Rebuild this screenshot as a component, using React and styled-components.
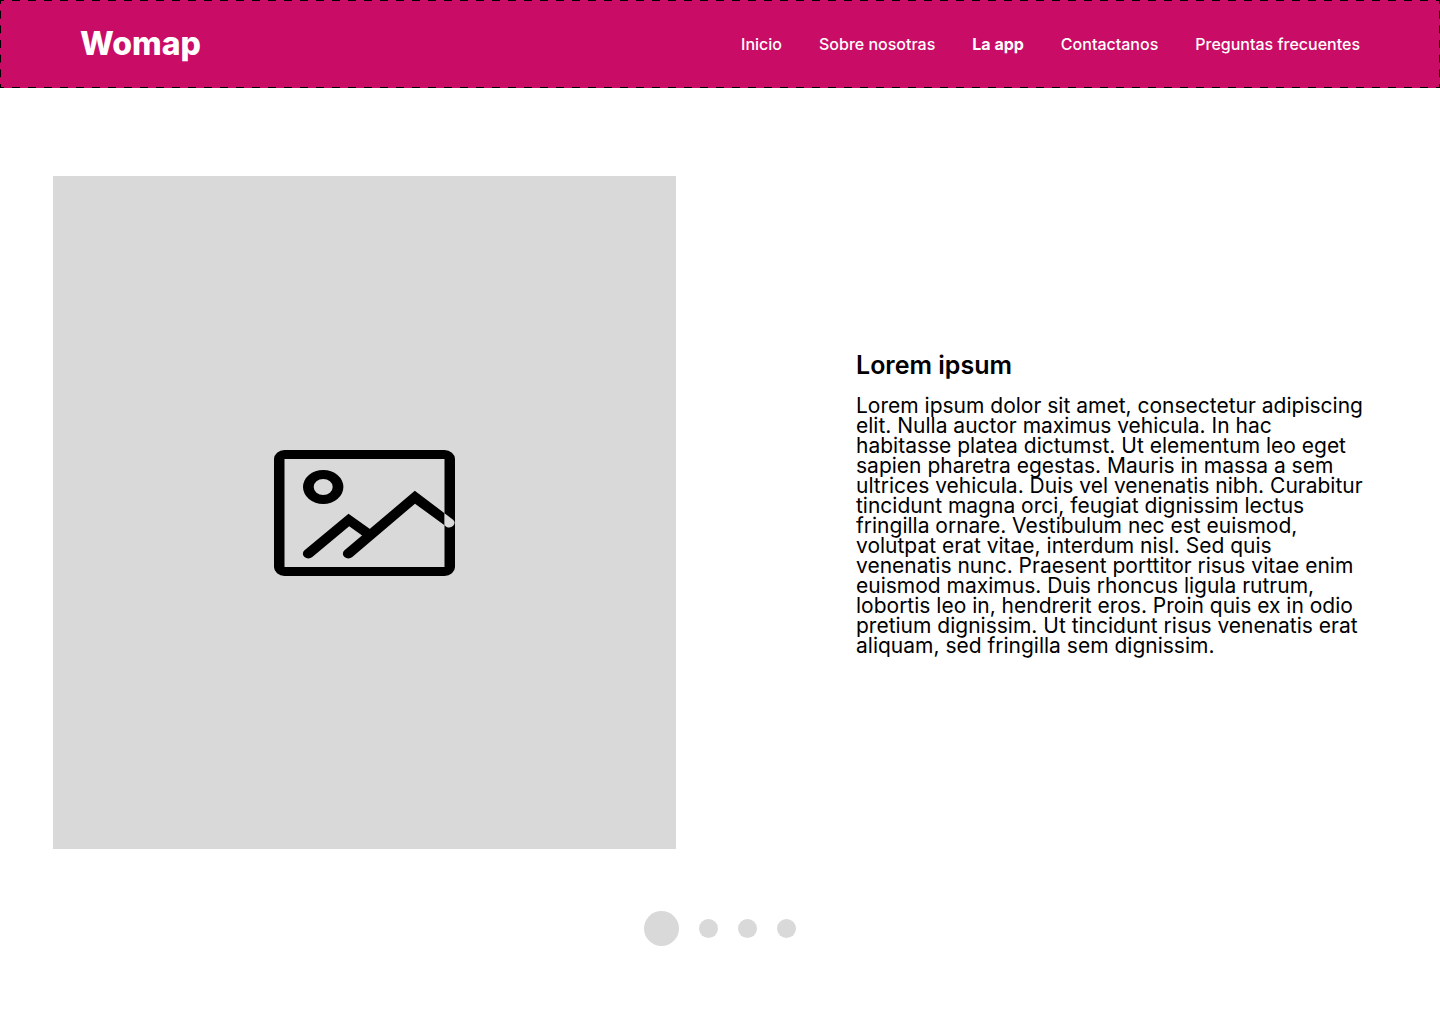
import React, { useState } from "react";
import styled, { createGlobalStyle } from "styled-components";

const GlobalStyle = createGlobalStyle`
  *, *::before, *::after { box-sizing: border-box; }
  body {
    margin: 0;
    background: #fff;
    color: #000;
    font-family: Inter, "Liberation Sans", sans-serif;
    font-optical-sizing: none;
  }
`;

const Page = styled.div`
  display: flex;
  flex-direction: column;
  min-height: 100vh;
`;

/* The long dashes are wider than a CSS dashed border draws them. */
const dash = (direction) =>
  `linear-gradient(${direction}, #000 25%, transparent 25% 75%, #000 75%)`;

const Header = styled.header`
  display: flex;
  align-items: center;
  justify-content: space-between;
  padding: 24px 80px;
  color: #fff;
  background-color: #c90c66;
  background-image: ${dash("to right")}, ${dash("to right")}, ${dash("to bottom")}, ${dash("to bottom")};
  background-position: left top, left bottom, left top, right top;
  background-size: 16px 1px, 16px 1px, 1px 16px, 1px 16px;
  background-repeat: round no-repeat, round no-repeat, no-repeat round, no-repeat round;
`;

const Brand = styled.a`
  color: inherit;
  font-size: 32px;
  font-weight: 800;
  line-height: 40px;
  text-decoration: none;
`;

const Nav = styled.nav`
  display: flex;
  gap: 37px;
`;

const NavLink = styled.a`
  color: inherit;
  font-size: 16px;
  font-weight: ${({ $active }) => ($active ? 700 : 500)};
  line-height: 20px;
  text-decoration: none;
`;

const Slide = styled.main`
  display: grid;
  grid-template-columns: 623fr 512fr;
  column-gap: 180px;
  align-items: center;
  padding: 88px 72px 62px 53px;
`;

const Picture = styled.div`
  display: flex;
  align-items: center;
  justify-content: center;
  aspect-ratio: 623 / 673;
  background: #d9d9d9;
`;

const PictureIcon = styled.svg`
  width: 181px;
  height: 126px;
`;

const Copy = styled.article`
  display: flex;
  flex-direction: column;
  gap: 16px;
  padding-bottom: 20px;
`;

const Title = styled.h1`
  margin: 0;
  font-size: 25px;
  font-weight: 600;
  line-height: 30px;
`;

const Text = styled.p`
  margin: 0;
  font-size: 21px;
  line-height: 20px;
`;

const Dots = styled.div`
  display: flex;
  align-items: center;
  justify-content: center;
  gap: 20px;
  height: 35px;
`;

const Dot = styled.button`
  width: ${({ $active }) => ($active ? 35 : 19)}px;
  height: ${({ $active }) => ($active ? 35 : 19)}px;
  padding: 0;
  border: 0;
  border-radius: 50%;
  background: #d9d9d9;
  cursor: pointer;
`;

const links = ["Inicio", "Sobre nosotras", "La app", "Contactanos", "Preguntas frecuentes"];

export default function App() {
  const [slide, setSlide] = useState(0);
  return (
    <Page>
      <GlobalStyle />
      <Header>
        <Brand href="#">Womap</Brand>
        <Nav>
          {links.map((label) => (
            <NavLink key={label} href="#" $active={label === "La app"}>
              {label}
            </NavLink>
          ))}
        </Nav>
      </Header>
      <Slide>
        <Picture>
          <PictureIcon viewBox="0 0 181 126" aria-hidden="true">
            <path
              fillRule="evenodd"
              d="M10.500 0H170.500A10.500 9 0 0 1 181 9V117A10.500 9 0 0 1 170.500 126H10.500A10.500 9 0 0 1 0 117V9A10.500 9 0 0 1 10.500 0ZM10.500 9V117H170.500V9Z"
            />
            <path
              fillRule="evenodd"
              d="M29 37A20.200 17 0 1 1 69.400 37A20.200 17 0 1 1 29 37ZM39.700 37A9.500 8 0 1 0 58.700 37A9.500 8 0 1 0 39.700 37Z"
            />
            <path d="M74.500 63.700 97 79.700 89.500 86.500 75.200 76.200 38.300 107A5.500 4.700 0 0 1 30.500 100.300Z" />
            <path d="M140.800 40.800 170.500 63.200V75.300L141 53.700 78.300 107A5.500 4.700 0 0 1 70.500 100.300Z" />
            <path d="M170.500 63.200 179.400 69.900A5.500 4.700 0 0 1 172.600 76.900L170.500 75.300Z" fill="#d9d9d9" />
          </PictureIcon>
        </Picture>
        <Copy>
          <Title>Lorem ipsum</Title>
          <Text>
            Lorem ipsum dolor sit amet, consectetur adipiscing elit. Nulla auctor maximus vehicula. In hac
            habitasse platea dictumst. Ut elementum leo eget sapien pharetra egestas. Mauris in massa a sem
            ultrices vehicula. Duis vel venenatis nibh. Curabitur tincidunt magna orci, feugiat dignissim lectus
            fringilla ornare. Vestibulum nec est euismod, volutpat erat vitae, interdum nisl. Sed quis venenatis
            nunc. Praesent porttitor risus vitae enim euismod maximus. Duis rhoncus ligula rutrum, lobortis leo
            in, hendrerit eros. Proin quis ex in odio pretium dignissim. Ut tincidunt risus venenatis erat
            aliquam, sed fringilla sem dignissim.
          </Text>
        </Copy>
      </Slide>
      <Dots>
        {[0, 1, 2, 3].map((i) => (
          <Dot
            key={i}
            type="button"
            aria-label={`Diapositiva ${i + 1}`}
            $active={slide === i}
            onClick={() => setSlide(i)}
          />
        ))}
      </Dots>
    </Page>
  );
}
